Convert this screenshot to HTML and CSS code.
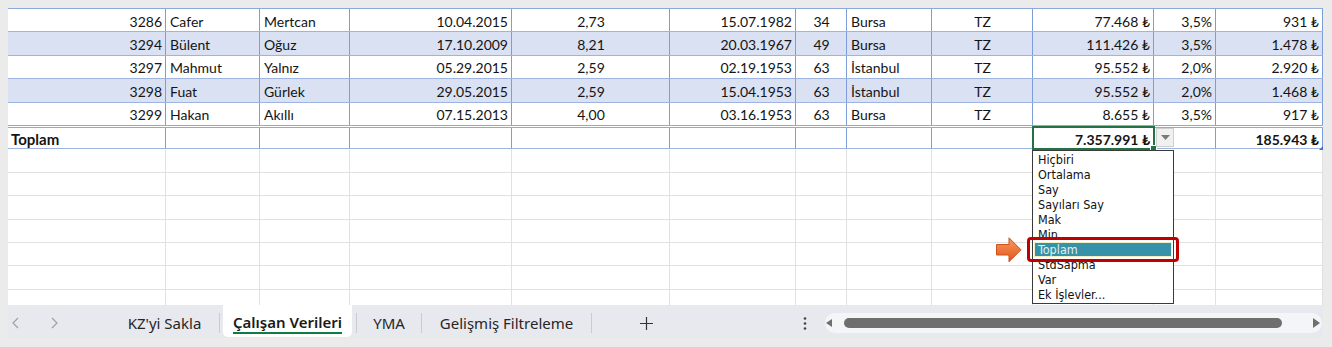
FILE: index.html
```html
<!DOCTYPE html>
<html lang="tr">
<head>
    <meta charset="UTF-8">
    <title>Çalışan Verileri</title>
    <link rel="stylesheet" href="styles.css">
</head>
<body>
<div class="window">
    <div class="sheet">
        <!-- table rows -->
        <div class="row">
            <div class="cell r">3286</div><div class="cell">Cafer</div><div class="cell">Mertcan</div>
            <div class="cell r">10.04.2015</div><div class="cell c">2,73</div><div class="cell r">15.07.1982</div>
            <div class="cell c">34</div><div class="cell">Bursa</div><div class="cell c">TZ</div>
            <div class="cell r">77.468 ₺</div><div class="cell r">3,5%</div><div class="cell r">931 ₺</div>
        </div>
        <div class="row alt">
            <div class="cell r">3294</div><div class="cell">Bülent</div><div class="cell">Oğuz</div>
            <div class="cell r">17.10.2009</div><div class="cell c">8,21</div><div class="cell r">20.03.1967</div>
            <div class="cell c">49</div><div class="cell">Bursa</div><div class="cell c">TZ</div>
            <div class="cell r">111.426 ₺</div><div class="cell r">3,5%</div><div class="cell r">1.478 ₺</div>
        </div>
        <div class="row">
            <div class="cell r">3297</div><div class="cell">Mahmut</div><div class="cell">Yalnız</div>
            <div class="cell r">05.29.2015</div><div class="cell c">2,59</div><div class="cell r">02.19.1953</div>
            <div class="cell c">63</div><div class="cell">İstanbul</div><div class="cell c">TZ</div>
            <div class="cell r">95.552 ₺</div><div class="cell r">2,0%</div><div class="cell r">2.920 ₺</div>
        </div>
        <div class="row alt">
            <div class="cell r">3298</div><div class="cell">Fuat</div><div class="cell">Gürlek</div>
            <div class="cell r">29.05.2015</div><div class="cell c">2,59</div><div class="cell r">15.04.1953</div>
            <div class="cell c">63</div><div class="cell">İstanbul</div><div class="cell c">TZ</div>
            <div class="cell r">95.552 ₺</div><div class="cell r">2,0%</div><div class="cell r">1.468 ₺</div>
        </div>
        <div class="row last">
            <div class="cell r">3299</div><div class="cell">Hakan</div><div class="cell">Akıllı</div>
            <div class="cell r">07.15.2013</div><div class="cell c">4,00</div><div class="cell r">03.16.1953</div>
            <div class="cell c">63</div><div class="cell">Bursa</div><div class="cell c">TZ</div>
            <div class="cell r">8.655 ₺</div><div class="cell r">3,5%</div><div class="cell r">917 ₺</div>
        </div>
        <div class="row total">
            <div class="cell label">Toplam</div><div class="cell"></div><div class="cell"></div>
            <div class="cell"></div><div class="cell"></div><div class="cell"></div>
            <div class="cell"></div><div class="cell"></div><div class="cell"></div>
            <div class="cell r">7.357.991 ₺</div><div class="cell"></div><div class="cell r">185.943 ₺</div>
        </div>

        <!-- empty grid -->
        <div class="row empty"><div class="cell"></div><div class="cell"></div><div class="cell"></div><div class="cell"></div><div class="cell"></div><div class="cell"></div><div class="cell"></div><div class="cell"></div><div class="cell"></div><div class="cell"></div><div class="cell"></div><div class="cell"></div></div>
        <div class="row empty"><div class="cell"></div><div class="cell"></div><div class="cell"></div><div class="cell"></div><div class="cell"></div><div class="cell"></div><div class="cell"></div><div class="cell"></div><div class="cell"></div><div class="cell"></div><div class="cell"></div><div class="cell"></div></div>
        <div class="row empty"><div class="cell"></div><div class="cell"></div><div class="cell"></div><div class="cell"></div><div class="cell"></div><div class="cell"></div><div class="cell"></div><div class="cell"></div><div class="cell"></div><div class="cell"></div><div class="cell"></div><div class="cell"></div></div>
        <div class="row empty"><div class="cell"></div><div class="cell"></div><div class="cell"></div><div class="cell"></div><div class="cell"></div><div class="cell"></div><div class="cell"></div><div class="cell"></div><div class="cell"></div><div class="cell"></div><div class="cell"></div><div class="cell"></div></div>
        <div class="row empty"><div class="cell"></div><div class="cell"></div><div class="cell"></div><div class="cell"></div><div class="cell"></div><div class="cell"></div><div class="cell"></div><div class="cell"></div><div class="cell"></div><div class="cell"></div><div class="cell"></div><div class="cell"></div></div>
        <div class="row empty"><div class="cell"></div><div class="cell"></div><div class="cell"></div><div class="cell"></div><div class="cell"></div><div class="cell"></div><div class="cell"></div><div class="cell"></div><div class="cell"></div><div class="cell"></div><div class="cell"></div><div class="cell"></div></div>
        <div class="row empty"><div class="cell"></div><div class="cell"></div><div class="cell"></div><div class="cell"></div><div class="cell"></div><div class="cell"></div><div class="cell"></div><div class="cell"></div><div class="cell"></div><div class="cell"></div><div class="cell"></div><div class="cell"></div></div>

        <!-- overlays: selection, dropdown, annotation -->
        <div class="selection"><span class="handle"></span></div>
        <div class="drop-btn">
            <svg width="9" height="5" viewBox="0 0 9 5"><polygon points="0,0 9,0 4.5,5" fill="#7a7a7a"/></svg>
        </div>
        <div class="resize-mark"></div>
        <ul class="menu">
            <li>Hiçbiri</li>
            <li>Ortalama</li>
            <li>Say</li>
            <li>Sayıları Say</li>
            <li>Mak</li>
            <li>Min</li>
            <li class="active">Toplam</li>
            <li>StdSapma</li>
            <li>Var</li>
            <li>Ek İşlevler...</li>
        </ul>
        <div class="callout"></div>
        <svg class="pointer" width="26" height="26" viewBox="0 0 26 26">
            <defs>
                <linearGradient id="orange" x1="0" y1="0" x2="0" y2="1">
                    <stop offset="0" stop-color="#f89a5c"/>
                    <stop offset="1" stop-color="#e2561c"/>
                </linearGradient>
            </defs>
            <polygon points="0.5,7.5 13,7.5 13,0.8 25,12.8 13,24.8 13,18 0.5,18" fill="url(#orange)" stroke="#c9521f" stroke-width="1"/>
        </svg>
    </div>

    <!-- sheet tabs -->
    <div class="tabs">
        <div class="nav">
            <svg width="10" height="12" viewBox="0 0 10 12"><polyline points="7,1 2,6 7,11" fill="none" stroke="#a0a0a0" stroke-width="1.2"/></svg>
            <svg width="10" height="12" viewBox="0 0 10 12"><polyline points="3,1 8,6 3,11" fill="none" stroke="#a0a0a0" stroke-width="1.2"/></svg>
        </div>
        <div class="tab t1">KZ'yi Sakla</div>
        <span class="sep"></span>
        <div class="tab current"><span>Çalışan Verileri</span></div>
        <span class="sep"></span>
        <div class="tab t3">YMA</div>
        <span class="sep"></span>
        <div class="tab t4">Gelişmiş Filtreleme</div>
        <span class="sep"></span>
        <div class="add">
            <svg width="13" height="13" viewBox="0 0 13 13"><path d="M6.5 0V13M0 6.5H13" stroke="#333" stroke-width="1.2"/></svg>
        </div>
        <div class="more">
            <svg width="4" height="13" viewBox="0 0 4 13"><circle cx="2" cy="1.5" r="1.3" fill="#444"/><circle cx="2" cy="6.5" r="1.3" fill="#444"/><circle cx="2" cy="11.5" r="1.3" fill="#444"/></svg>
        </div>
        <div class="scroll">
            <svg width="6" height="8" viewBox="0 0 6 8"><polygon points="6,0 6,8 0,4" fill="#6f6f6f"/></svg>
            <div class="thumb"></div>
            <svg class="right" width="7" height="10" viewBox="0 0 7 10"><polygon points="0,0 7,5 0,10" fill="#6f6f6f"/></svg>
        </div>
    </div>
</div>
</body>
</html>
```

FILE: styles.css
```css
body {
    margin: 0;
    background: #ebebeb;
    font-family: "Lato", "Noto Sans", sans-serif;
}
.window {
    padding: 8px 0 9px 8px;
    width: 1315px;
}
.sheet {
    position: relative;
    height: 297px;
    background: #fff;
    overflow: hidden;
    border-top: 1px solid #8eaadb;
    box-sizing: border-box;
}

/* grid rows */
.row {
    display: grid;
    grid-template-columns: 158px 94px 90px 162px 158px 126px 51px 85px 101px 121px 62px 107px;
    height: 23.4px;
    box-sizing: border-box;
    border-bottom: 1px solid #9db4e1;
}
.row.alt {
    background: #d9e1f2;
}
.row.last {
    height: 22.2px;
    border-bottom: none;
}
.row.total {
    height: 24.6px;
    border-top: 3px double #8eaadb;
    font-weight: bold;
}
.row.empty {
    border-bottom-color: #e1e1e1;
}
.cell {
    display: flex;
    align-items: center;
    padding: 2px 3px 0 4px;
    border-right: 1px solid #7d9dd8;
    font-size: 14px;
    color: #141414;
    white-space: nowrap;
    overflow: hidden;
}
.row.empty .cell {
    border-right-color: #e1e1e1;
}
.row.total .label {
    padding-left: 3px;
    font-size: 15px;
}
.r {
    justify-content: flex-end;
}
.c {
    justify-content: center;
}

/* selected cell with total dropdown */
.selection {
    position: absolute;
    left: 1024px;
    top: 117px;
    width: 123px;
    height: 24px;
    border: 2px solid #217346;
    box-sizing: border-box;
}
.handle {
    position: absolute;
    right: -4px;
    bottom: -4px;
    width: 5px;
    height: 5px;
    background: #217346;
    border: 1px solid #fff;
}
.drop-btn {
    position: absolute;
    left: 1148px;
    top: 119px;
    width: 18px;
    height: 19px;
    background: #f0f0f0;
    border: 1px solid #cfcfcf;
    box-sizing: border-box;
    display: flex;
    align-items: center;
    justify-content: center;
}
.resize-mark {
    position: absolute;
    left: 1311px;
    top: 137px;
    width: 0;
    height: 0;
    border-left: 4px solid transparent;
    border-bottom: 4px solid #4472c4;
}
.menu {
    position: absolute;
    left: 1024px;
    top: 141px;
    width: 142px;
    height: 154px;
    margin: 0;
    padding: 1px 0 0;
    list-style: none;
    background: #fff;
    border: 1px solid #3a3a3a;
    box-sizing: border-box;
    font-family: "DejaVu Sans Condensed", "DejaVu Sans", sans-serif;
    font-stretch: condensed;
    font-size: 12.5px;
    color: #111;
}
.menu li {
    height: 15px;
    line-height: 15px;
    padding-left: 5px;
}
.menu li.active {
    margin: 0 1px;
    padding-left: 3px;
    background: #3592a8;
    border: 1px solid #f1eec6;
    height: 13px;
    line-height: 13px;
    color: #e3efe8;
}

/* annotation */
.callout {
    position: absolute;
    left: 1019px;
    top: 228px;
    width: 152px;
    height: 25px;
    border: 3px solid #c00000;
    border-radius: 4px;
    box-sizing: border-box;
}
.pointer {
    position: absolute;
    left: 988px;
    top: 228px;
}

/* sheet tabs */
.tabs {
    display: flex;
    align-items: center;
    height: 33px;
    background: #e7e9ee;
    font-family: "Noto Sans", sans-serif;
    font-size: 15px;
    color: #262626;
}
.nav {
    width: 102px;
    display: flex;
    align-items: center;
    padding-top: 3px;
}
.nav svg {
    margin-left: 3px;
    margin-right: 25px;
}
.tab {
    text-align: center;
    padding-top: 3px;
}
.t1 { width: 109px; }
.t3 { width: 64px; }
.t4 { width: 169px; }
.sep {
    width: 1px;
    height: 20px;
    margin-top: 3px;
    background: #c9cbd0;
}
.tab.current {
    align-self: flex-start;
    width: 129px;
    height: 32px;
    margin: 0 4px 0 3px;
    padding-top: 0;
    background: #fff;
    border-radius: 0 0 5px 5px;
    display: flex;
    justify-content: center;
    align-items: center;
    font-weight: 600;
    color: #1a1a1a;
}
.tab.current span {
    padding-top: 4px;
    border-bottom: 2px solid #107c41;
    line-height: 19px;
}
.add {
    width: 108px;
    display: flex;
    justify-content: center;
    padding-top: 3px;
}
.more {
    width: 18px;
    margin-left: 96px;
    display: flex;
    justify-content: center;
    padding-top: 3px;
}
.scroll {
    width: 497px;
    height: 20px;
    margin-left: 11px;
    margin-top: 3px;
    background: #f4f5f7;
    border-radius: 10px;
    display: flex;
    align-items: center;
}
.scroll svg {
    margin-left: 1px;
}
.thumb {
    width: 438px;
    height: 10px;
    margin-left: 12px;
    background: #6e6e6e;
    border-radius: 5px;
}
.scroll .right {
    margin-left: 31px;
}
```
